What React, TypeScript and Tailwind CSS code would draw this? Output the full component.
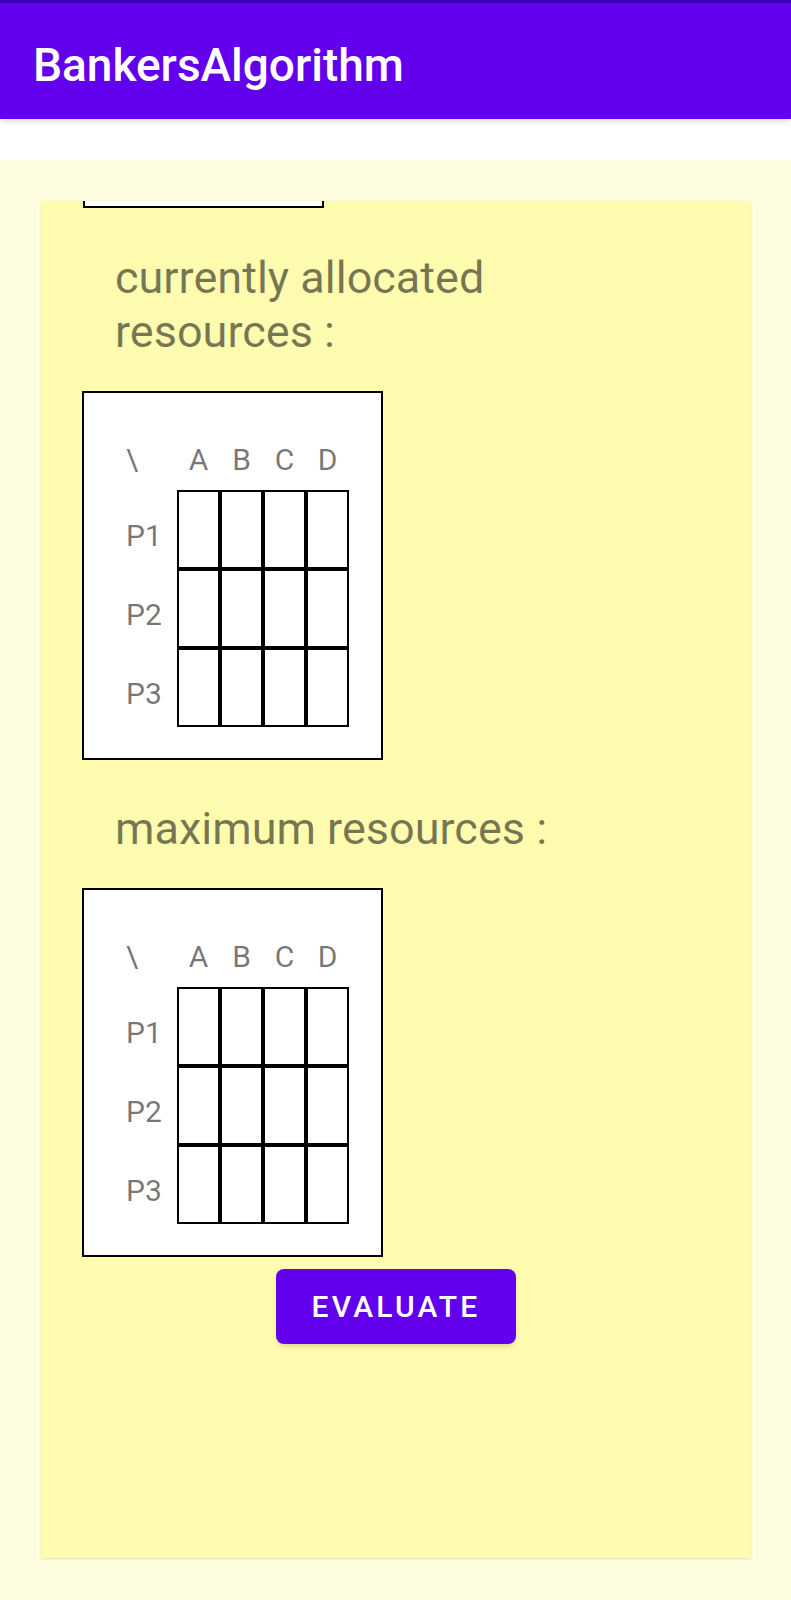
import React from 'react';

const columns = ['A', 'B', 'C', 'D'];
const processes = ['P1', 'P2', 'P3'];

const MatrixBox: React.FC = () => (
  <div className="ml-[41px] w-[301px] h-[369px] border-2 border-black bg-white pt-[49px]">
    <div className="flex text-[30px] leading-[36px] text-[#0000008a]">
      <div className="w-[93px] pl-[42px]">\</div>
      {columns.map((c) => (
        <div key={c} className="w-[43px] text-center">
          {c}
        </div>
      ))}
    </div>
    <div className="mt-[12px] flex flex-col">
      {processes.map((p) => (
        <div key={p} className="flex">
          <div className="w-[93px] h-[79px] pl-[42px] pt-[12px] text-[30px] leading-[67px] text-[#0000008a]">{p}</div>
          {columns.map((c) => (
            <div key={c} className="w-[43px] h-[79px] border-2 border-black bg-white" />
          ))}
        </div>
      ))}
    </div>
  </div>
);

const SectionLabel: React.FC<{ text: string; top: string }> = ({ text, top }) => (
  <p className={`ml-[74px] ${top} w-[470px] text-[45px] leading-[54px] text-[#0000008a]`}>{text}</p>
);

const App: React.FC = () => {
  return (
    <div className="w-[791px] h-[1600px] flex flex-col bg-[#fffde0] font-['Roboto','Noto_Sans',sans-serif] overflow-hidden">
      {/* app bar */}
      <div className="h-[119px] bg-[#6200ee] shadow-md z-10">
        <div className="h-[3px] bg-[#3700b3]" />
        <h1 className="pl-[33px] pt-[36px] text-[46px] leading-[52px] font-medium text-white">BankersAlgorithm</h1>
      </div>
      <div className="h-[41px] bg-white" />

      {/* scroll area */}
      <div className="flex-1 pt-[41px]">
        <div className="ml-[41px] w-[710px] h-[1357px] bg-[#fffcb0] overflow-hidden shadow-sm flex flex-col">
          <div className="ml-[42px] w-[241px] h-[7px] border-x-2 border-b-2 border-black bg-white" />

          <SectionLabel text="currently allocated resources :" top="mt-[43px]" />
          <div className="mt-[32px]">
            <MatrixBox />
          </div>

          <SectionLabel text="maximum resources :" top="mt-[42px]" />
          <div className="mt-[32px]">
            <MatrixBox />
          </div>

          <div className="mt-[12px] flex justify-center">
            <button className="w-[240px] h-[75px] rounded-[8px] bg-[#6200ee] text-white text-[30px] font-medium tracking-[3.2px] shadow-md flex items-center justify-center">
              EVALUATE
            </button>
          </div>
        </div>
      </div>
    </div>
  );
};

export default App;
